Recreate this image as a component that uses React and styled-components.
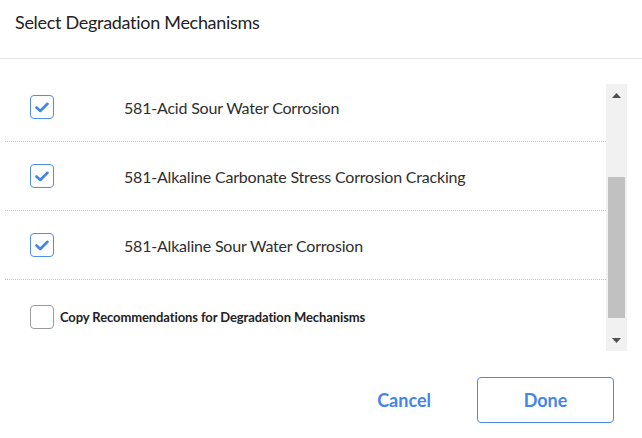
import React from "react";
import styled, { createGlobalStyle } from "styled-components";

const GlobalStyle = createGlobalStyle`
  html, body {
    margin: 0;
    padding: 0;
    background: #ffffff;
  }
  body {
    font-family: Lato, "Open Sans", sans-serif;
    color: #2b2b2b;
  }
`;

const Dialog = styled.div`
  width: 642px;
  height: 438px;
  display: flex;
  flex-direction: column;
  background: #ffffff;
`;

const Header = styled.div`
  height: 59px;
  border-bottom: 1px solid #e6e6e6;
  display: flex;
  align-items: flex-start;
  padding: 11px 0 0 15px;
  box-sizing: border-box;

  h1 {
    margin: 0;
    font-size: 18px;
    font-weight: 400;
    color: #222222;
    letter-spacing: -0.3px;
  }
`;

const Body = styled.div`
  display: flex;
  height: 296px;
  padding-left: 5px;
`;

const List = styled.div`
  width: 601px;
  padding-top: 14px;
  display: flex;
  flex-direction: column;
`;

const Row = styled.div`
  height: 68px;
  display: flex;
  align-items: center;
  border-bottom: 1px dotted #c4c4c4;
  padding-left: 25px;
`;

const CopyRow = styled.div`
  height: 74px;
  display: flex;
  align-items: center;
  padding-left: 25px;
  gap: 6px;
`;

const Box = styled.span`
  width: 24px;
  height: 24px;
  box-sizing: border-box;
  border: 1px solid ${(p) => (p.$checked ? "#4f8fe6" : "#9a9a9a")};
  border-radius: 4px;
  display: flex;
  align-items: center;
  justify-content: center;
  flex-shrink: 0;
`;

const Label = styled.span`
  margin-left: 70px;
  font-size: 16px;
  color: #2e2e2e;
  letter-spacing: -0.2px;
`;

const CopyLabel = styled.span`
  font-size: 13px;
  font-weight: 700;
  color: #222222;
  letter-spacing: -0.1px;
`;

const ScrollTrack = styled.div`
  margin-top: 25px;
  width: 21px;
  height: 267px;
  background: #f1f1f1;
  display: flex;
  flex-direction: column;
  align-items: center;
`;

const Arrow = styled.div`
  height: 22px;
  display: flex;
  align-items: center;
  justify-content: center;
`;

const Thumb = styled.div`
  margin-top: 71px;
  width: 17px;
  height: 141px;
  background: #c1c1c1;
`;

const Spacer = styled.div`
  flex: 1;
`;

const Footer = styled.div`
  flex: 1;
  display: flex;
  justify-content: flex-end;
  align-items: flex-start;
  padding: 22px 28px 0 0;
  gap: 46px;
`;

const Button = styled.button`
  font-family: Lato, "Open Sans", sans-serif;
  font-size: 18px;
  font-weight: 700;
  color: #4585e5;
  background: #ffffff;
  border: ${(p) => (p.$outlined ? "1px solid #4a88e3" : "none")};
  border-radius: 4px;
  width: ${(p) => (p.$outlined ? "137px" : "auto")};
  height: 46px;
  padding: 0;
  cursor: pointer;
`;

function Check({ checked }) {
  return (
    <Box $checked={checked}>
      {checked && (
        <svg width="14" height="11" viewBox="0 0 14 11">
          <path
            d="M1.5 5.5 L5.2 9 L12.5 1.8"
            fill="none"
            stroke="#3f86e6"
            strokeWidth="2.6"
            strokeLinecap="round"
            strokeLinejoin="round"
          />
        </svg>
      )}
    </Box>
  );
}

const items = [
  "581-Acid Sour Water Corrosion",
  "581-Alkaline Carbonate Stress Corrosion Cracking",
  "581-Alkaline Sour Water Corrosion",
];

export default function App() {
  return (
    <>
      <GlobalStyle />
      <Dialog>
        <Header>
          <h1>Select Degradation Mechanisms</h1>
        </Header>
        <Body>
          <List>
            {items.map((t) => (
              <Row key={t}>
                <Check checked />
                <Label>{t}</Label>
              </Row>
            ))}
            <CopyRow>
              <Check />
              <CopyLabel>Copy Recommendations for Degradation Mechanisms</CopyLabel>
            </CopyRow>
          </List>
          <ScrollTrack>
            <Arrow>
              <svg width="9" height="5" viewBox="0 0 9 5">
                <path d="M0 5 L4.5 0 L9 5 Z" fill="#505050" />
              </svg>
            </Arrow>
            <Thumb />
            <Spacer />
            <Arrow>
              <svg width="9" height="5" viewBox="0 0 9 5">
                <path d="M0 0 L9 0 L4.5 5 Z" fill="#505050" />
              </svg>
            </Arrow>
          </ScrollTrack>
        </Body>
        <Footer>
          <Button>Cancel</Button>
          <Button $outlined>Done</Button>
        </Footer>
      </Dialog>
    </>
  );
}
